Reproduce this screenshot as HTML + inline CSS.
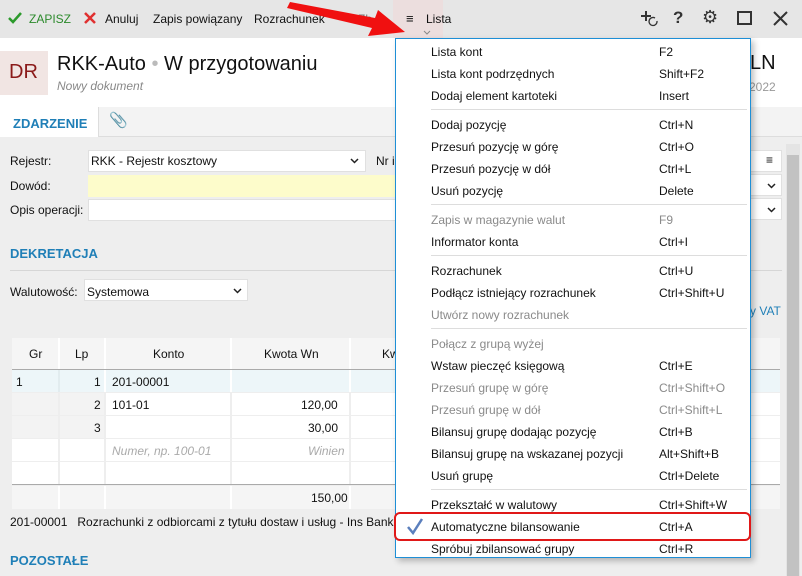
<!DOCTYPE html>
<html><head><meta charset="utf-8"><style>
*{box-sizing:border-box;margin:0;padding:0}
body{width:802px;height:576px;overflow:hidden;background:#eeeeee;font-family:"Liberation Sans",sans-serif;font-size:12px;color:#111;position:relative}
.a{position:absolute;white-space:nowrap}
.tb{left:0;top:0;width:802px;height:38px;background:#e6e6e6}
.hd{left:0;top:38px;width:802px;height:69px;background:#fff}
.tabs{left:0;top:107px;width:802px;height:30px;background:#f3f3f3;border-bottom:1px solid #ddd}
.inp{background:#fff;border:1px solid #e0e0e0;height:22px}
.cell{position:absolute;background:#fff}
.menu{left:395px;top:38px;width:356px;height:520px;background:#fff;border:1px solid #1e8fd6;box-shadow:3px 3px 6px rgba(0,0,0,.25)}
.mi{position:absolute;left:35px;font-size:12px}
.ms{position:absolute;left:263px;font-size:12px}
.g{color:#8a8a8a}
.sep{position:absolute;left:35px;width:316px;height:1px;background:#ddd}
.vs{position:absolute;width:2px;background:#fff}
</style></head><body>
<div class="a tb"></div>
<svg class="a" style="left:7px;top:11px" width="16" height="14"><polyline points="2,7 6,11 14,2" fill="none" stroke="#2c9a2c" stroke-width="2.5"/></svg>
<div class="a" style="left:29px;top:12px;color:#2c8a2c">ZAPISZ</div>
<svg class="a" style="left:83px;top:11px" width="14" height="14"><path d="M2 2L12 12M12 2L2 12" stroke="#e03030" stroke-width="2.5"/></svg>
<div class="a" style="left:105px;top:12px">Anuluj</div>
<div class="a" style="left:153px;top:12px">Zapis powiązany</div>
<div class="a" style="left:254px;top:12px">Rozrachunek</div>
<div class="a" style="left:358px;top:12px;color:#777">Zb</div>
<div class="a" style="left:393px;top:0;width:50px;height:38px;background:#ecdede"></div>
<div class="a" style="left:406px;top:11px;font-size:13px">≡</div>
<div class="a" style="left:426px;top:12px">Lista</div>
<svg class="a" style="left:423px;top:30px" width="8" height="5"><polyline points="1,1 4,4 7,1" fill="none" stroke="#888"/></svg>
<svg class="a" style="left:640px;top:9px" width="20" height="20"><path d="M6 2V12M1 7H11" stroke="#333" stroke-width="2"/><path d="M17 12a4 4 0 1 1-2-3" fill="none" stroke="#333" stroke-width="1.3"/></svg>
<div class="a" style="left:673px;top:8px;font-size:17px;color:#333;font-weight:bold">?</div>
<div class="a" style="left:702px;top:7px;font-size:18px;color:#333">⚙</div>
<div class="a" style="left:737px;top:11px;width:15px;height:14px;border:2px solid #333"></div>
<svg class="a" style="left:773px;top:11px" width="15" height="15"><path d="M1 1L14 14M14 1L1 14" stroke="#333" stroke-width="2"/></svg>
<svg class="a" style="left:280px;top:0" width="130" height="40"><polygon points="10,2 95,18 98,10 125,32 88,36 92,28 7,8" fill="#f01010"/></svg>

<div class="a hd"></div>
<div class="a" style="left:0;top:51px;width:48px;height:44px;background:#f1e5e3"></div>
<div class="a" style="left:9px;top:61px;font-size:20px;color:#8b1a1a">DR</div>
<div class="a" style="left:57px;top:53px;font-size:20px">RKK-Auto <span style="color:#bbb">•</span> W przygotowaniu</div>
<div class="a" style="left:57px;top:79px;font-size:12px;color:#888;font-style:italic">Nowy dokument</div>
<div class="a" style="left:750px;top:52px;font-size:20px">LN</div>
<div class="a" style="left:749px;top:80px;font-size:12px;color:#999">2022</div>

<div class="a tabs"></div>
<div class="a" style="left:0;top:107px;width:99px;height:30px;background:#fff;border-right:1px solid #ddd"></div>
<div class="a" style="left:13px;top:116px;font-weight:bold;color:#1f7fb7;font-size:13px">ZDARZENIE</div>
<div class="a" style="left:109px;top:111px;font-size:15px;color:#888">📎</div>

<div class="a" style="left:10px;top:154px">Rejestr:</div>
<div class="a inp" style="left:88px;top:150px;width:278px"></div>
<div class="a" style="left:91px;top:154px">RKK - Rejestr kosztowy</div>
<svg class="a" style="left:350px;top:158px" width="9" height="6"><polyline points="1,1 4.5,4.5 8,1" fill="none" stroke="#222" stroke-width="1.5"/></svg>
<div class="a" style="left:376px;top:154px">Nr i</div>
<div class="a" style="left:10px;top:179px">Dowód:</div>
<div class="a" style="left:88px;top:175px;width:310px;height:22px;background:#fdfccb"></div>
<div class="a" style="left:10px;top:203px">Opis operacji:</div>
<div class="a inp" style="left:88px;top:199px;width:310px"></div>
<div class="a inp" style="left:750px;top:150px;width:32px"></div>
<div class="a" style="left:766px;top:153px;font-size:12px">≡</div>
<div class="a inp" style="left:750px;top:174px;width:32px"></div>
<svg class="a" style="left:767px;top:183px" width="9" height="6"><polyline points="1,1 4.5,4.5 8,1" fill="none" stroke="#222" stroke-width="1.5"/></svg>
<div class="a inp" style="left:750px;top:198px;width:32px"></div>
<svg class="a" style="left:767px;top:207px" width="9" height="6"><polyline points="1,1 4.5,4.5 8,1" fill="none" stroke="#222" stroke-width="1.5"/></svg>
<div class="a" style="left:10px;top:246px;font-weight:bold;color:#1f7fb7;font-size:13px">DEKRETACJA</div>
<div class="a" style="left:10px;top:270px;width:772px;height:1px;background:#d6d6d6"></div>
<div class="a" style="left:10px;top:285px">Walutowość:</div>
<div class="a inp" style="left:84px;top:279px;width:164px"></div>
<div class="a" style="left:87px;top:285px">Systemowa</div>
<svg class="a" style="left:233px;top:288px" width="9" height="6"><polyline points="1,1 4.5,4.5 8,1" fill="none" stroke="#222" stroke-width="1.5"/></svg>
<div class="a" style="left:750px;top:304px;color:#1f7fb7">y VAT</div>

<!-- table -->
<div class="a" style="left:12px;top:338px;width:768px;height:171px;background:#eeeeee"></div>
<div class="cell" style="left:12px;top:338px;width:768px;height:31px;background:#f5f5f5"></div>
<div class="vs" style="left:58px;top:338px;height:31px"></div><div class="vs" style="left:104px;top:338px;height:31px"></div><div class="vs" style="left:230px;top:338px;height:31px"></div><div class="vs" style="left:349px;top:338px;height:31px"></div>
<div class="a" style="left:29px;top:347px">Gr</div>
<div class="a" style="left:75px;top:347px">Lp</div>
<div class="a" style="left:153px;top:347px">Konto</div>
<div class="a" style="left:264px;top:347px">Kwota Wn</div>
<div class="a" style="left:382px;top:347px">Kw</div>
<div class="a" style="left:12px;top:369px;width:768px;height:1px;background:#aaa"></div>
<div class="cell" style="left:12px;top:370px;width:768px;height:22px;background:#edf6f9"></div>
<div class="vs" style="left:58px;top:370px;height:22px;background:#e2ecef"></div><div class="vs" style="left:104px;top:370px;height:22px"></div><div class="vs" style="left:230px;top:370px;height:22px"></div><div class="vs" style="left:349px;top:370px;height:22px"></div>
<div class="cell" style="left:12px;top:393px;width:46px;height:22px;background:#f3f3f3"></div><div class="cell" style="left:60px;top:393px;width:44px;height:22px;background:#f3f3f3"></div><div class="cell" style="left:106px;top:393px;width:124px;height:22px"></div><div class="cell" style="left:232px;top:393px;width:117px;height:22px"></div><div class="cell" style="left:351px;top:393px;width:429px;height:22px"></div>
<div class="cell" style="left:12px;top:416px;width:46px;height:22px;background:#f3f3f3"></div><div class="cell" style="left:60px;top:416px;width:44px;height:22px;background:#f3f3f3"></div><div class="cell" style="left:106px;top:416px;width:124px;height:22px"></div><div class="cell" style="left:232px;top:416px;width:117px;height:22px"></div><div class="cell" style="left:351px;top:416px;width:429px;height:22px"></div>
<div class="cell" style="left:12px;top:439px;width:46px;height:22px"></div><div class="cell" style="left:60px;top:439px;width:44px;height:22px"></div><div class="cell" style="left:106px;top:439px;width:124px;height:22px"></div><div class="cell" style="left:232px;top:439px;width:117px;height:22px"></div><div class="cell" style="left:351px;top:439px;width:429px;height:22px"></div>
<div class="cell" style="left:12px;top:462px;width:46px;height:22px"></div><div class="cell" style="left:60px;top:462px;width:44px;height:22px"></div><div class="cell" style="left:106px;top:462px;width:124px;height:22px"></div><div class="cell" style="left:232px;top:462px;width:117px;height:22px"></div><div class="cell" style="left:351px;top:462px;width:429px;height:22px"></div>
<div class="a" style="left:12px;top:484px;width:768px;height:1px;background:#aaa"></div>
<div class="cell" style="left:12px;top:486px;width:768px;height:23px;background:#f5f5f5"></div>
<div class="vs" style="left:58px;top:486px;height:23px"></div><div class="vs" style="left:104px;top:486px;height:23px"></div><div class="vs" style="left:230px;top:486px;height:23px"></div><div class="vs" style="left:349px;top:486px;height:23px"></div>
<div class="a" style="left:16px;top:375px">1</div>
<div class="a" style="left:94px;top:375px">1</div>
<div class="a" style="left:112px;top:375px">201-00001</div>
<div class="a" style="left:94px;top:398px">2</div>
<div class="a" style="left:112px;top:398px">101-01</div>
<div class="a" style="left:301px;top:398px">120,00</div>
<div class="a" style="left:94px;top:421px">3</div>
<div class="a" style="left:308px;top:421px">30,00</div>
<div class="a" style="left:112px;top:444px;color:#aaa;font-style:italic">Numer, np. 100-01</div>
<div class="a" style="left:308px;top:444px;color:#aaa;font-style:italic">Winien</div>
<div class="a" style="left:311px;top:491px">150,00</div>
<div class="a" style="left:10px;top:515px">201-00001 &nbsp; Rozrachunki z odbiorcami z tytułu dostaw i usług - Ins Bank</div>
<div class="a" style="left:10px;top:553px;font-weight:bold;color:#1f7fb7;font-size:13px">POZOSTAŁE</div>

<div class="a" style="left:786px;top:144px;width:14px;height:432px;background:#e4e4e4"></div>
<div class="a" style="left:787px;top:155px;width:12px;height:421px;background:#c2c2c2"></div>

<!-- menu -->
<div class="a menu">
<div class="mi" style="top:6px">Lista kont</div><div class="ms" style="top:6px">F2</div>
<div class="mi" style="top:28px">Lista kont podrzędnych</div><div class="ms" style="top:28px">Shift+F2</div>
<div class="mi" style="top:50px">Dodaj element kartoteki</div><div class="ms" style="top:50px">Insert</div>
<div class="sep" style="top:70px"></div>
<div class="mi" style="top:79px">Dodaj pozycję</div><div class="ms" style="top:79px">Ctrl+N</div>
<div class="mi" style="top:101px">Przesuń pozycję w górę</div><div class="ms" style="top:101px">Ctrl+O</div>
<div class="mi" style="top:123px">Przesuń pozycję w dół</div><div class="ms" style="top:123px">Ctrl+L</div>
<div class="mi" style="top:145px">Usuń pozycję</div><div class="ms" style="top:145px">Delete</div>
<div class="sep" style="top:165px"></div>
<div class="mi g" style="top:174px">Zapis w magazynie walut</div><div class="ms g" style="top:174px">F9</div>
<div class="mi" style="top:196px">Informator konta</div><div class="ms" style="top:196px">Ctrl+I</div>
<div class="sep" style="top:216px"></div>
<div class="mi" style="top:225px">Rozrachunek</div><div class="ms" style="top:225px">Ctrl+U</div>
<div class="mi" style="top:247px">Podłącz istniejący rozrachunek</div><div class="ms" style="top:247px">Ctrl+Shift+U</div>
<div class="mi g" style="top:269px">Utwórz nowy rozrachunek</div>
<div class="sep" style="top:289px"></div>
<div class="mi g" style="top:298px">Połącz z grupą wyżej</div>
<div class="mi" style="top:320px">Wstaw pieczęć księgową</div><div class="ms" style="top:320px">Ctrl+E</div>
<div class="mi g" style="top:342px">Przesuń grupę w górę</div><div class="ms g" style="top:342px">Ctrl+Shift+O</div>
<div class="mi g" style="top:364px">Przesuń grupę w dół</div><div class="ms g" style="top:364px">Ctrl+Shift+L</div>
<div class="mi" style="top:386px">Bilansuj grupę dodając pozycję</div><div class="ms" style="top:386px">Ctrl+B</div>
<div class="mi" style="top:408px">Bilansuj grupę na wskazanej pozycji</div><div class="ms" style="top:408px">Alt+Shift+B</div>
<div class="mi" style="top:430px">Usuń grupę</div><div class="ms" style="top:430px">Ctrl+Delete</div>
<div class="sep" style="top:450px"></div>
<div class="mi" style="top:459px">Przekształć w walutowy</div><div class="ms" style="top:459px">Ctrl+Shift+W</div>
<div class="mi" style="top:481px">Automatyczne bilansowanie</div><div class="ms" style="top:481px">Ctrl+A</div>
<svg class="a" style="left:10px;top:478px" width="18" height="18"><path d="M2 10L7 16L16 2" fill="none" stroke="#5b7fbd" stroke-width="2.5"/></svg>
<div class="mi" style="top:503px">Spróbuj zbilansować grupy</div><div class="ms" style="top:503px">Ctrl+R</div>
</div>
<div class="a" style="left:394px;top:512px;width:357px;height:29px;border:2px solid #e01818;border-radius:6px"></div>
</body></html>
